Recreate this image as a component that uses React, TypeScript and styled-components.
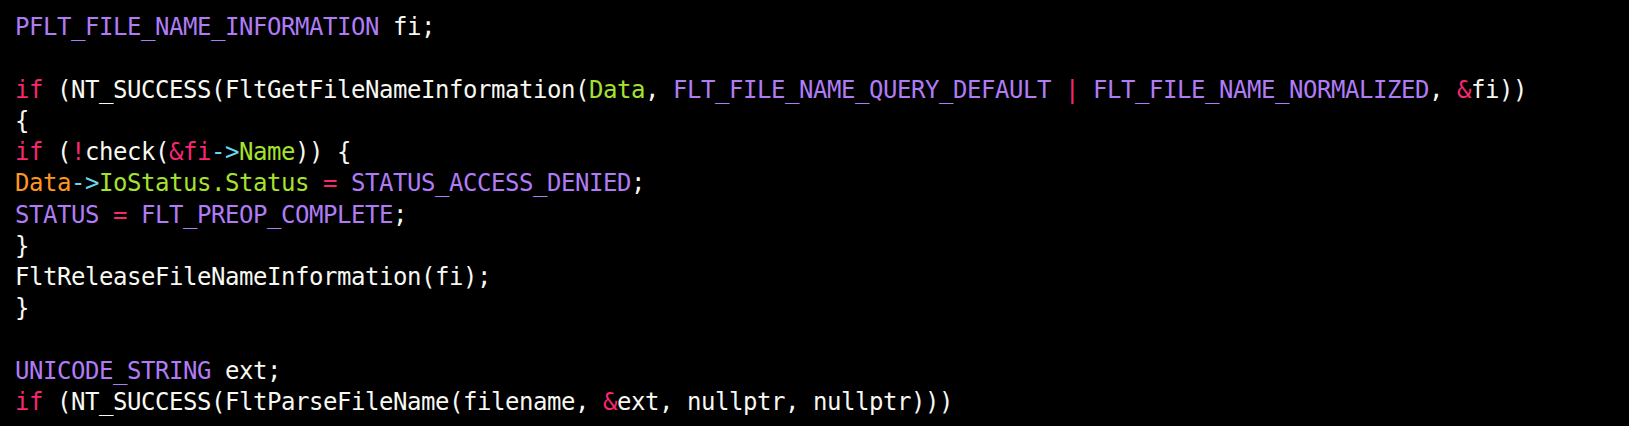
import React from "react";
import styled, { createGlobalStyle } from "styled-components";

const Global = createGlobalStyle`
  html, body { margin: 0; padding: 0; background: #000; }
`;

const Editor = styled.pre`
  margin: 0;
  padding: 12px 0 0 15px;
  min-height: 426px;
  box-sizing: border-box;
  background: #000;
  color: #f8f8f2;
  font-family: "DejaVu Sans Mono", "Liberation Mono", monospace;
  font-size: 24px;
  letter-spacing: -0.45px;
  line-height: 31.25px;
  display: flex;
  flex-direction: column;
`;

const Line = styled.div`
  height: 31.25px;
  white-space: pre;
`;

type Kind = "t" | "k" | "c" | "g" | "o" | "a";
const colors: Record<Kind, string> = {
  t: "#f8f8f2",
  k: "#f92672",
  c: "#b07cf6",
  g: "#a6e22e",
  o: "#fd971f",
  a: "#66d9ef",
};

const Tok = styled.span<{ $kind: Kind }>`
  color: ${(p) => colors[p.$kind]};
`;

const lines: [Kind, string][][] = [
  [["c", "PFLT_FILE_NAME_INFORMATION"], ["t", " fi;"]],
  [],
  [
    ["k", "if"],
    ["t", " (NT_SUCCESS(FltGetFileNameInformation("],
    ["g", "Data"],
    ["t", ", "],
    ["c", "FLT_FILE_NAME_QUERY_DEFAULT"],
    ["t", " "],
    ["k", "|"],
    ["t", " "],
    ["c", "FLT_FILE_NAME_NORMALIZED"],
    ["t", ", "],
    ["k", "&"],
    ["t", "fi))"],
  ],
  [["t", "{"]],
  [
    ["k", "if"],
    ["t", " ("],
    ["k", "!"],
    ["t", "check("],
    ["k", "&fi"],
    ["a", "->"],
    ["g", "Name"],
    ["t", ")) {"],
  ],
  [
    ["o", "Data"],
    ["a", "->"],
    ["g", "IoStatus.Status"],
    ["t", " "],
    ["k", "="],
    ["t", " "],
    ["c", "STATUS_ACCESS_DENIED"],
    ["t", ";"],
  ],
  [
    ["c", "STATUS"],
    ["t", " "],
    ["k", "="],
    ["t", " "],
    ["c", "FLT_PREOP_COMPLETE"],
    ["t", ";"],
  ],
  [["t", "}"]],
  [["t", "FltReleaseFileNameInformation(fi);"]],
  [["t", "}"]],
  [],
  [["c", "UNICODE_STRING"], ["t", " ext;"]],
  [
    ["k", "if"],
    ["t", " (NT_SUCCESS(FltParseFileName(filename, "],
    ["k", "&"],
    ["t", "ext, nullptr, nullptr)))"],
  ],
];

export default function App() {
  return (
    <>
      <Global />
      <Editor>
        {lines.map((toks, i) => (
          <Line key={i}>
            {toks.length === 0
              ? " "
              : toks.map(([k, s], j) => (
                  <Tok key={j} $kind={k}>
                    {s}
                  </Tok>
                ))}
          </Line>
        ))}
      </Editor>
    </>
  );
}
